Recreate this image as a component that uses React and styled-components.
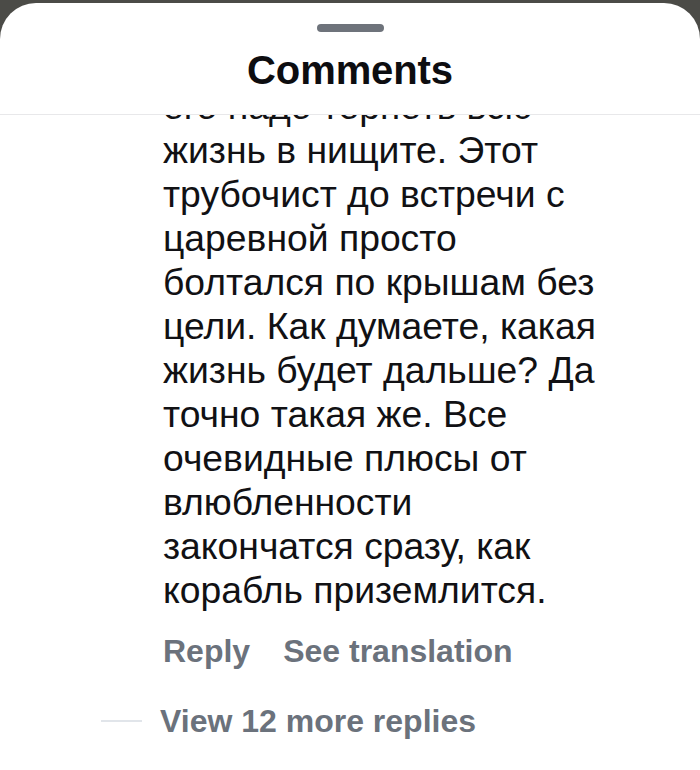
import React from "react";
import styled, { createGlobalStyle } from "styled-components";

const GlobalStyle = createGlobalStyle`
  html, body {
    margin: 0;
    padding: 0;
    background: #4b4b47;
  }
  * {
    box-sizing: border-box;
  }
`;

const Backdrop = styled.div`
  height: 770px;
  padding-top: 3px;
  overflow: hidden;
  font-family: "Liberation Sans", Arial, sans-serif;
`;

const Sheet = styled.div`
  height: 767px;
  background: #fff;
  border-radius: 36px 36px 0 0;
  display: flex;
  flex-direction: column;
  overflow: hidden;
`;

const Header = styled.div`
  display: flex;
  flex-direction: column;
  align-items: center;
  padding: 21px 0 20px;
  border-bottom: 1px solid #e8e8ea;
`;

const Handle = styled.div`
  width: 67px;
  height: 8px;
  border-radius: 4px;
  background: #6e737b;
`;

const Title = styled.h1`
  margin: 14px 0 0;
  font-size: 40px;
  line-height: 48px;
  font-weight: 700;
  color: #0d0d10;
  letter-spacing: -0.1px;
`;

const Scroll = styled.div`
  flex: 1;
  min-height: 0;
  overflow: hidden;
`;

const Comment = styled.div`
  margin-top: -31px;
  padding-left: 163px;
`;

const Body = styled.p`
  margin: 0;
  font-size: 37.3px;
  line-height: 44px;
  color: #111114;
  white-space: nowrap;
`;

const Actions = styled.div`
  display: flex;
  gap: 33px;
  margin-top: 19px;
`;

const Action = styled.span`
  font-size: 32px;
  line-height: 40px;
  font-weight: 600;
  color: #6b727c;
`;

const MoreReplies = styled.div`
  display: flex;
  align-items: center;
  gap: 18px;
  margin-top: 30px;
  padding-left: 101px;
`;

const Rule = styled.div`
  width: 41px;
  height: 2px;
  background: #e1e5ea;
`;

const lines = [
  "его надо терпеть всю",
  "жизнь в нищите. Этот",
  "трубочист до встречи с",
  "царевной просто",
  "болтался по крышам без",
  "цели. Как думаете, какая",
  "жизнь будет дальше? Да",
  "точно такая же. Все",
  "очевидные плюсы от",
  "влюбленности",
  "закончатся сразу, как",
  "корабль приземлится.",
];

export default function App() {
  return (
    <Backdrop>
      <GlobalStyle />
      <Sheet>
        <Header>
          <Handle />
          <Title>Comments</Title>
        </Header>
        <Scroll>
          <Comment>
            <Body>
              {lines.map((l, i) => (
                <React.Fragment key={i}>
                  {l}
                  {i < lines.length - 1 && <br />}
                </React.Fragment>
              ))}
            </Body>
            <Actions>
              <Action>Reply</Action>
              <Action>See translation</Action>
            </Actions>
          </Comment>
          <MoreReplies>
            <Rule />
            <Action>View 12 more replies</Action>
          </MoreReplies>
        </Scroll>
      </Sheet>
    </Backdrop>
  );
}
